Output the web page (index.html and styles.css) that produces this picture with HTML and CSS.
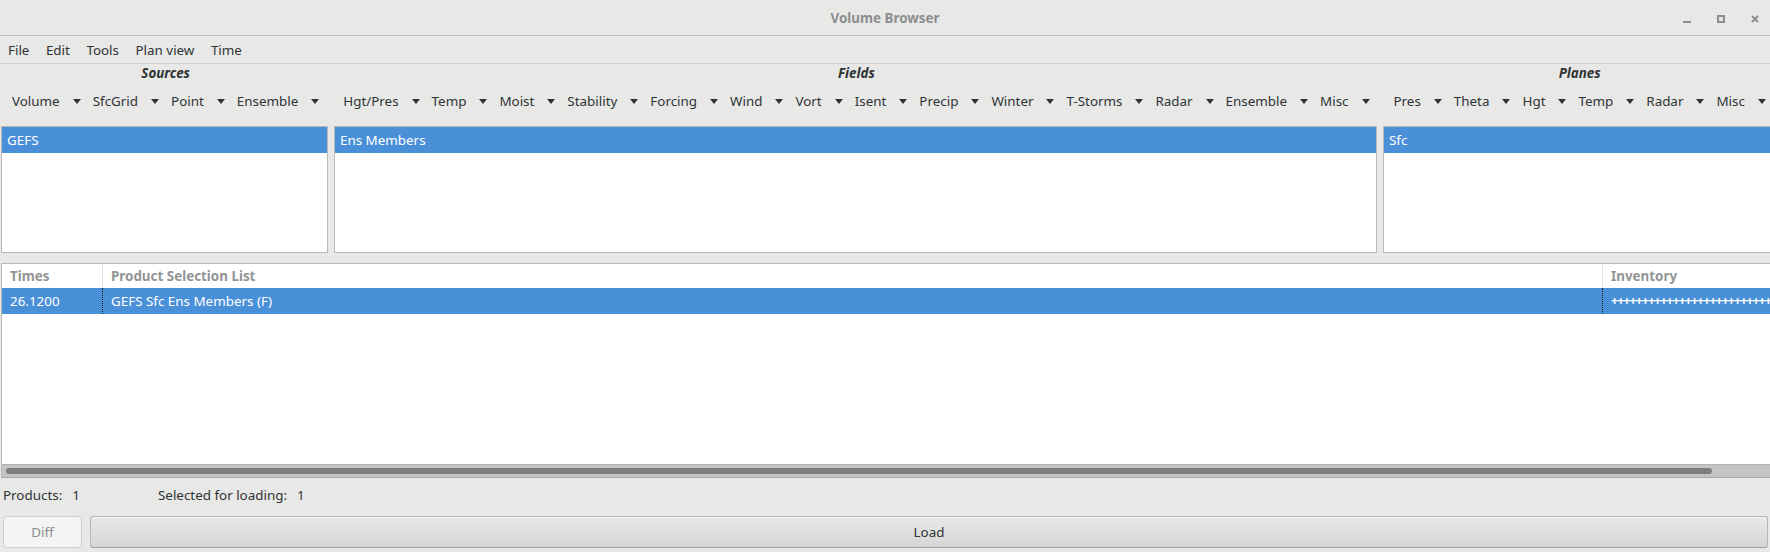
FILE: index.html
```html
<!DOCTYPE html>
<html lang="en">
<head>
  <meta charset="UTF-8">
  <title>Volume Browser</title>
  <link rel="stylesheet" href="styles.css">
</head>
<body>
  <div class="window">
    <header class="titlebar">
      <span></span>
      <span class="title">Volume Browser</span>
      <div class="win-controls">
        <svg class="win-icon" width="8" height="8" viewBox="0 0 8 8"><rect x="0" y="6" width="8" height="2"/></svg>
        <svg class="win-icon" width="8" height="8" viewBox="0 0 8 8"><path d="M0 0h8v8H0z M2 2v4h4V2z" fill-rule="evenodd"/></svg>
        <svg class="win-icon" width="8" height="8" viewBox="0 0 8 8"><path d="M1 1L7 7M7 1L1 7" stroke-width="2" stroke="#8b8e8f"/></svg>
      </div>
    </header>

    <nav class="menubar">
      <span class="menu-item">File</span>
      <span class="menu-item">Edit</span>
      <span class="menu-item">Tools</span>
      <span class="menu-item">Plan view</span>
      <span class="menu-item">Time</span>
    </nav>

    <div class="toolbar">
      <div class="group">
        <div class="group-title">Sources</div>
        <div class="group-items">
          <span class="dropdown">Volume<svg class="arrow" viewBox="0 0 8 5"><path d="M0 0h8L4 5z"/></svg></span>
          <span class="dropdown">SfcGrid<svg class="arrow" viewBox="0 0 8 5"><path d="M0 0h8L4 5z"/></svg></span>
          <span class="dropdown">Point<svg class="arrow" viewBox="0 0 8 5"><path d="M0 0h8L4 5z"/></svg></span>
          <span class="dropdown">Ensemble<svg class="arrow" viewBox="0 0 8 5"><path d="M0 0h8L4 5z"/></svg></span>
        </div>
      </div>
      <div class="group">
        <div class="group-title">Fields</div>
        <div class="group-items">
          <span class="dropdown">Hgt/Pres<svg class="arrow" viewBox="0 0 8 5"><path d="M0 0h8L4 5z"/></svg></span>
          <span class="dropdown">Temp<svg class="arrow" viewBox="0 0 8 5"><path d="M0 0h8L4 5z"/></svg></span>
          <span class="dropdown">Moist<svg class="arrow" viewBox="0 0 8 5"><path d="M0 0h8L4 5z"/></svg></span>
          <span class="dropdown">Stability<svg class="arrow" viewBox="0 0 8 5"><path d="M0 0h8L4 5z"/></svg></span>
          <span class="dropdown">Forcing<svg class="arrow" viewBox="0 0 8 5"><path d="M0 0h8L4 5z"/></svg></span>
          <span class="dropdown">Wind<svg class="arrow" viewBox="0 0 8 5"><path d="M0 0h8L4 5z"/></svg></span>
          <span class="dropdown">Vort<svg class="arrow" viewBox="0 0 8 5"><path d="M0 0h8L4 5z"/></svg></span>
          <span class="dropdown">Isent<svg class="arrow" viewBox="0 0 8 5"><path d="M0 0h8L4 5z"/></svg></span>
          <span class="dropdown">Precip<svg class="arrow" viewBox="0 0 8 5"><path d="M0 0h8L4 5z"/></svg></span>
          <span class="dropdown">Winter<svg class="arrow" viewBox="0 0 8 5"><path d="M0 0h8L4 5z"/></svg></span>
          <span class="dropdown">T-Storms<svg class="arrow" viewBox="0 0 8 5"><path d="M0 0h8L4 5z"/></svg></span>
          <span class="dropdown">Radar<svg class="arrow" viewBox="0 0 8 5"><path d="M0 0h8L4 5z"/></svg></span>
          <span class="dropdown">Ensemble<svg class="arrow" viewBox="0 0 8 5"><path d="M0 0h8L4 5z"/></svg></span>
          <span class="dropdown">Misc<svg class="arrow" viewBox="0 0 8 5"><path d="M0 0h8L4 5z"/></svg></span>
        </div>
      </div>
      <div class="group">
        <div class="group-title">Planes</div>
        <div class="group-items">
          <span class="dropdown">Pres<svg class="arrow" viewBox="0 0 8 5"><path d="M0 0h8L4 5z"/></svg></span>
          <span class="dropdown">Theta<svg class="arrow" viewBox="0 0 8 5"><path d="M0 0h8L4 5z"/></svg></span>
          <span class="dropdown">Hgt<svg class="arrow" viewBox="0 0 8 5"><path d="M0 0h8L4 5z"/></svg></span>
          <span class="dropdown">Temp<svg class="arrow" viewBox="0 0 8 5"><path d="M0 0h8L4 5z"/></svg></span>
          <span class="dropdown">Radar<svg class="arrow" viewBox="0 0 8 5"><path d="M0 0h8L4 5z"/></svg></span>
          <span class="dropdown">Misc<svg class="arrow" viewBox="0 0 8 5"><path d="M0 0h8L4 5z"/></svg></span>
        </div>
      </div>
    </div>

    <div class="lists">
      <div class="list list-sources"><div class="list-row selected">GEFS</div></div>
      <div class="list list-fields"><div class="list-row selected">Ens Members</div></div>
      <div class="list list-planes"><div class="list-row selected">Sfc</div></div>
    </div>

    <div class="table">
      <div class="table-head">
        <div class="cell col-times">Times</div>
        <div class="cell col-product">Product Selection List</div>
        <div class="cell col-inventory">Inventory</div>
      </div>
      <div class="table-row selected">
        <div class="cell col-times">26.1200</div>
        <div class="cell col-product focus">GEFS Sfc Ens Members (F)</div>
        <div class="cell col-inventory focus inventory">++++++++++++++++++++++++++</div>
      </div>
      <div class="table-fill"></div>
      <div class="hscroll"><div class="hscroll-thumb"></div></div>
    </div>

    <div class="status">
      <div class="status-item status-products"><span>Products:</span><span>1</span></div>
      <div class="status-item"><span>Selected for loading:</span><span>1</span></div>
    </div>

    <div class="actions">
      <button class="btn btn-diff" disabled>Diff</button>
      <button class="btn btn-load">Load</button>
    </div>
  </div>
</body>
</html>
```

FILE: styles.css
```css
html, body {
  margin: 0;
  padding: 0;
  overflow: hidden;
}

body {
  font-family: "Noto Sans", "Open Sans", sans-serif;
  font-size: 13.4px;
  color: #2e3436;
  background-color: #e8e8e7;
}

.window {
  width: 1770px;
  height: 552px;
  overflow: hidden;
  background-color: #e8e8e7;
}

/* Title bar */
.titlebar {
  height: 35px;
  border-bottom: 1px solid #c3c3c0;
  display: grid;
  grid-template-columns: 1fr auto 1fr;
  align-items: center;
}

.title {
  font-weight: bold;
  color: #8b8e8f;
}

.win-controls {
  justify-self: end;
  display: flex;
  align-items: center;
  gap: 26px;
  padding-right: 11px;
  padding-top: 2px;
}

.win-icon {
  display: block;
  fill: #8b8e8f;
}

/* Menu bar */
.menubar {
  height: 27px;
  border-bottom: 1px solid #cfcfcc;
  display: flex;
  align-items: center;
}

.menu-item {
  padding: 0 8.5px 0 8px;
}

/* Toolbar with dropdown groups */
.toolbar {
  display: flex;
  height: 62px;
  white-space: nowrap;
}

.group {
  padding: 0 6px;
  flex-shrink: 0;
}

.group-title {
  height: 18px;
  line-height: 18px;
  text-align: center;
  font-weight: bold;
  font-style: italic;
}

.group-items {
  display: flex;
  margin-top: 9px;
}

.dropdown {
  display: flex;
  align-items: center;
  gap: 13px;
  height: 20px;
  padding: 0 6px;
}

.arrow {
  width: 8px;
  height: 5px;
  fill: #2e3436;
}

/* Selection lists */
.lists {
  display: flex;
  gap: 6px;
  padding-left: 1px;
}

.list {
  height: 125px;
  flex-shrink: 0;
  background-color: #fff;
  border: 1px solid #b9b9b6;
}

.list-sources { width: 325px; }
.list-fields { width: 1041px; }
.list-planes { width: 420px; }

.list-row {
  height: 26px;
  line-height: 26px;
  padding-left: 5px;
}

.selected {
  background-color: #4a90d9;
  color: #fff;
}

/* Product table */
.table {
  margin-top: 10px;
  margin-left: 1px;
  width: 1800px;
  background-color: #fff;
  border-top: 1px solid #b9b9b6;
  border-left: 1px solid #b9b9b6;
}

.table-head,
.table-row {
  display: flex;
}

.table-head {
  height: 24px;
  line-height: 24px;
  font-weight: bold;
  color: #929595;
}

.table-row {
  height: 26px;
  line-height: 26px;
}

.cell {
  padding-left: 8px;
  box-sizing: border-box;
  white-space: nowrap;
  overflow: hidden;
}

.col-times { width: 100px; }
.col-product { width: 1500px; }
.col-inventory { width: 198px; }

.table-head .col-product,
.table-head .col-inventory {
  border-left: 1px solid #e2e2e2;
}

.table-row .focus {
  border-left: 1px dotted #1a1a1a;
}

.inventory {
  font-weight: bold;
  font-size: 12.5px;
  letter-spacing: -1px;
}

.table-fill {
  height: 150px;
}

.hscroll {
  height: 9px;
  background-color: #c3c4c3;
  border-top: 1px solid #b2b3b1;
  border-bottom: 1px solid #a9aaa8;
  padding: 3px 0 0 4px;
}

.hscroll-thumb {
  width: 1706px;
  height: 6px;
  border-radius: 3px;
  background-color: #7b7e7e;
}

/* Status line */
.status {
  height: 32px;
  display: flex;
  align-items: center;
  padding-left: 3px;
  margin-top: 1px;
}

.status-item {
  display: flex;
  gap: 10px;
}

.status-products {
  width: 155px;
}

/* Buttons */
.actions {
  display: flex;
  gap: 8px;
  padding: 5px 2px 0 3px;
}

.btn {
  height: 32px;
  font-family: inherit;
  font-size: 13.4px;
  border-radius: 3px;
  padding: 0;
}

.btn-diff {
  width: 79px;
  background-color: #f4f4f3;
  border: 1px solid #d0d0ce;
  color: #8b8e8f;
}

.btn-load {
  flex: 1;
  color: #2e3436;
  background: linear-gradient(to bottom, #e8e8e7, #d6d6d5);
  border: 1px solid #b6b6b3;
  border-bottom-color: #a1a19d;
  box-shadow: inset 0 1px #f2f2f1;
}
```
